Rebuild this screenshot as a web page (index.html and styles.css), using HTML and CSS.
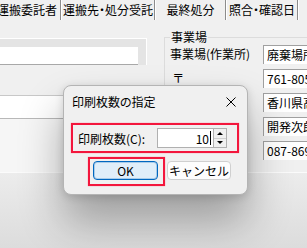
FILE: index.html
```html
<!DOCTYPE html>
<html lang="ja">
<head>
<meta charset="utf-8">
<title>印刷枚数の指定</title>
<link rel="stylesheet" href="styles.css">
</head>
<body>
<div class="screen">
  <div class="tabs">
    <div class="tab t1">運搬委託者</div>
    <div class="tab t2">運搬先・処分受託</div>
    <div class="tab t3">最終処分</div>
    <div class="tab t4">照合・確認日</div>
  </div>
  <div class="main">
    <div class="left">
      <div class="panel"><div class="field"></div></div>
      <div class="field second"></div>
      <div class="pale"></div>
    </div>
    <fieldset class="group">
      <legend>事業場</legend>
      <div class="row"><span class="lbl">事業場(作業所)</span><span class="box">廃棄場所</span></div>
      <div class="row"><span class="lbl zip">〒</span><span class="box">761-8055</span></div>
      <div class="row"><span class="lbl"></span><span class="box">香川県高松市</span></div>
      <div class="row"><span class="lbl"></span><span class="box">開発次郎</span></div>
      <div class="row"><span class="lbl"></span><span class="box">087-869-</span></div>
    </fieldset>
  </div>
  <div class="lower"></div>

  <div class="dialog">
    <div class="titlebar">
      <span class="title">印刷枚数の指定</span>
      <span class="close"><svg width="10" height="10" viewBox="0 0 10 10"><path d="M0.5 0.5L9.5 9.5M9.5 0.5L0.5 9.5" stroke="#000" stroke-width="1" fill="none"/></svg></span>
    </div>
    <div class="dbody">
      <div class="mark qty">
        <span class="dlabel">印刷枚数(C):</span>
        <div class="spin">
          <div class="edit"><span>10</span><i class="caret"></i></div>
          <div class="arrows"><span class="arrow"><b class="up"></b></span><span class="arrow"><b class="down"></b></span></div>
        </div>
      </div>
      <div class="btnrow">
        <div class="mark okmark"><button class="btn ok">OK</button></div>
        <button class="btn cancel">キャンセル</button>
      </div>
    </div>
  </div>
</div>
</body>
</html>
```

FILE: styles.css
```css
* { box-sizing: border-box; }
html, body { margin: 0; padding: 0; }
body {
  width: 307px;
  height: 248px;
  overflow: hidden;
  font-family: "Noto Sans CJK JP", "Noto Sans", sans-serif;
  font-size: 12px;
  color: #000;
  font-feature-settings: "palt";
}
.screen {
  position: relative;
  width: 307px;
  height: 248px;
  overflow: hidden;
  background: #f0f0f0;
}

/* tabs */
.tabs {
  display: flex;
  height: 20px;
  margin-left: -6px;
}
.tab {
  flex: none;
  height: 20px;
  line-height: 19px;
  text-align: center;
  white-space: nowrap;
  border-right: 1px solid #8c8c8c;
  box-shadow: 1px 0 0 #ffffff;
  margin-right: 1px;
}
.t1 { width: 67px; }
.t2 { width: 93px; }
.t3 { width: 70px; }
.t4 { width: 71px; }

/* main area */
.main {
  display: flex;
  height: 152px;
}
.left {
  flex: none;
  width: 147px;
  display: flex;
  flex-direction: column;
}
.panel {
  margin-top: 18px;
  height: 27px;
  background: #e4e4e4;
  border-top: 1px solid #ffffff;
  border-right: 1px solid #ffffff;
  padding: 8px 8px 0 0;
}
.field {
  height: 18px;
  background: #ffffff;
  border-bottom: 1px solid #a8a8a8;
}
.field.second {
  margin-top: 30px;
  height: 24px;
  border-top: 1px solid #c8c8c8;
  border-bottom: 1px solid #b8b8b8;
}
.pale {
  flex: 1;
  background: #f6f6f6;
}

.group {
  flex: 1;
  min-width: 0;
  margin: 10px 0 0 17px;
  padding: 0 0 0 5px;
  border: 1px solid #dcdcdc;
  border-right: none;
  border-bottom: none;
}
.group legend {
  padding: 0 1px;
  line-height: 14px;
  font-size: 12px;
}
.row {
  display: flex;
  height: 19px;
  margin-top: 5px;
  align-items: stretch;
}
.row:first-of-type { margin-top: 1px; }
.lbl {
  flex: none;
  width: 93px;
  line-height: 18px;
  white-space: nowrap;
}
.lbl.zip { padding-left: 3px; }
.box {
  flex: 1;
  min-width: 0;
  overflow: hidden;
  white-space: nowrap;
  background: #ffffff;
  border-top: 1px solid #a0a0a0;
  border-left: 1px solid #a0a0a0;
  padding-left: 3px;
  line-height: 17px;
}

.lower {
  height: 76px;
  border-top: 1px solid #fbfbfb;
  background: linear-gradient(180deg, #ececec, #dcdcdc);
}

/* dialog */
.dialog {
  position: absolute;
  left: 63px;
  top: 85px;
  width: 185px;
  height: 110px;
  background: #f0f0f0;
  border: 1px solid #b4b4b4;
  border-radius: 8px;
  box-shadow: 0 26px 44px rgba(0, 0, 0, 0.32), 0 2px 8px rgba(0, 0, 0, 0.14);
}
.titlebar {
  display: flex;
  align-items: center;
  height: 31px;
  padding-left: 8px;
}
.title {
  flex: 1;
  white-space: nowrap;
}
.close {
  display: flex;
  align-items: center;
  justify-content: center;
  width: 32px;
  height: 31px;
}
.close svg { display: block; }
.dbody {
  padding: 6px 0 0 7px;
}
.mark {
  border: 2px solid #f3163c;
  box-shadow: 0 0 1px #ff7890;
}
.qty {
  width: 168px;
  height: 30px;
  display: flex;
  align-items: center;
  padding: 2px 10px 2px 5px;
}
.dlabel {
  white-space: nowrap;
}
.spin {
  margin-left: auto;
  display: flex;
  width: 70px;
  height: 20px;
}
.edit {
  flex: 1;
  display: flex;
  align-items: center;
  justify-content: flex-end;
  background: #ffffff;
  border: 1px solid #b0b0b0;
  border-right: none;
  padding-right: 2px;
}
.caret {
  display: block;
  width: 1px;
  height: 14px;
  background: #000;
  margin-left: 1px;
}
.arrows {
  flex: none;
  width: 14px;
  display: flex;
  flex-direction: column;
  border: 1px solid #b0b0b0;
  background: #f0f0f0;
}
.arrow {
  flex: 1;
  display: flex;
  align-items: center;
  justify-content: center;
}
.arrow + .arrow { border-top: 1px solid #d0d0d0; }
.up, .down {
  display: block;
  width: 0;
  height: 0;
  border-left: 3px solid transparent;
  border-right: 3px solid transparent;
}
.up { border-bottom: 3px solid #000; }
.down { border-top: 3px solid #000; }

.btnrow {
  display: flex;
  align-items: flex-start;
  margin-top: 4px;
  padding-left: 17px;
  gap: 2px;
}
.okmark {
  padding: 2px 5px 4px 3px;
}
.btn {
  display: block;
  margin: 0;
  height: 19px;
  padding: 0;
  font-family: inherit;
  font-size: 12px;
  line-height: 17px;
  color: #000;
  border-radius: 4px;
}
.ok {
  width: 65px;
  background: #e0eef9;
  border: 1px solid #0067c0;
  box-shadow: inset 0 0 0 1px rgba(0, 103, 192, 0.25);
}
.cancel {
  width: 64px;
  margin-top: 4px;
  background: #fdfdfd;
  border: 1px solid #d0d0d0;
}
```
